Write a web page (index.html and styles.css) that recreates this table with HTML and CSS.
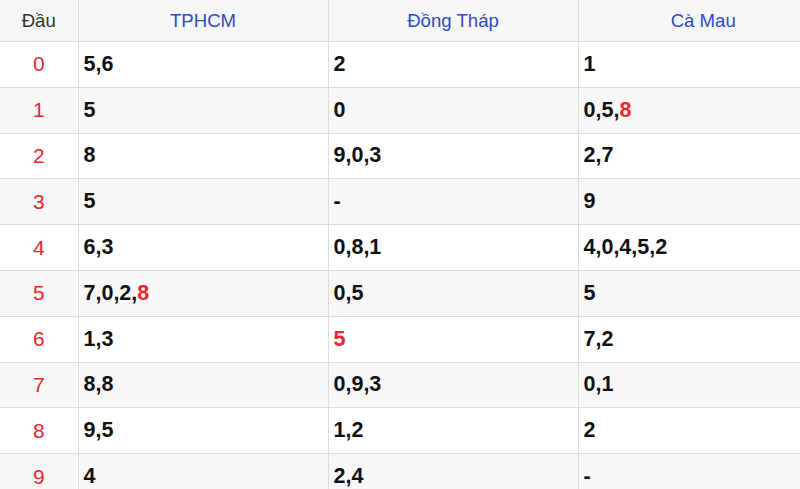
FILE: index.html
```html
<!DOCTYPE html>
<html lang="vi">
<head>
<meta charset="utf-8">
<link rel="stylesheet" href="styles.css">
</head>
<body>
<table class="loto">
  <colgroup><col class="c-head"><col class="c-prov"><col class="c-prov"><col class="c-prov"></colgroup>
  <thead>
    <tr><th class="dau">Đầu</th><th>TPHCM</th><th>Đồng Tháp</th><th>Cà Mau</th></tr>
  </thead>
  <tbody>
    <tr><td class="num">0</td><td>5,6</td><td>2</td><td>1</td></tr>
    <tr><td class="num">1</td><td>5</td><td>0</td><td>0,5,<span class="hl">8</span></td></tr>
    <tr><td class="num">2</td><td>8</td><td>9,0,3</td><td>2,7</td></tr>
    <tr><td class="num">3</td><td>5</td><td>-</td><td>9</td></tr>
    <tr><td class="num">4</td><td>6,3</td><td>0,8,1</td><td>4,0,4,5,2</td></tr>
    <tr><td class="num">5</td><td>7,0,2,<span class="hl">8</span></td><td>0,5</td><td>5</td></tr>
    <tr><td class="num">6</td><td>1,3</td><td><span class="hl">5</span></td><td>7,2</td></tr>
    <tr><td class="num">7</td><td>8,8</td><td>0,9,3</td><td>0,1</td></tr>
    <tr><td class="num">8</td><td>9,5</td><td>1,2</td><td>2</td></tr>
    <tr><td class="num">9</td><td>4</td><td>2,4</td><td>-</td></tr>
  </tbody>
</table>
</body>
</html>
```
FILE: styles.css
```css
html, body {
  margin: 0;
  padding: 0;
  background: #ffffff;
}
body {
  font-family: "Liberation Sans", Arial, sans-serif;
  overflow: hidden;
}
.loto {
  width: 800px;
  border-collapse: collapse;
  table-layout: fixed;
}
.c-head { width: 78px; }
.c-prov { width: 250px; }
.loto th, .loto td {
  border: 1px solid #dcdcdc;
  padding: 0 0 0 5px;
  vertical-align: middle;
}
.loto tr > :first-child { border-left: none; }
.loto tr > :last-child { border-right: none; }
.loto thead tr > * { border-top: none; }
.loto th {
  height: 41px;
  background: #f6f6f6;
  font-weight: normal;
  font-size: 18.6px;
  color: #2c4cc0;
  text-align: center;
  padding: 0;
}
.loto th.dau { color: #333333; }
.loto td {
  height: 44.8px;
  font-size: 21.5px;
  font-weight: bold;
  color: #111111;
  text-align: left;
}
.loto tbody tr:nth-child(even) td { background: #f7f7f7; }
.loto td.num {
  text-align: center;
  font-weight: normal;
  color: #e8262e;
  padding: 0;
  font-size: 21px;
}
.hl { color: #e8262e; }
```
